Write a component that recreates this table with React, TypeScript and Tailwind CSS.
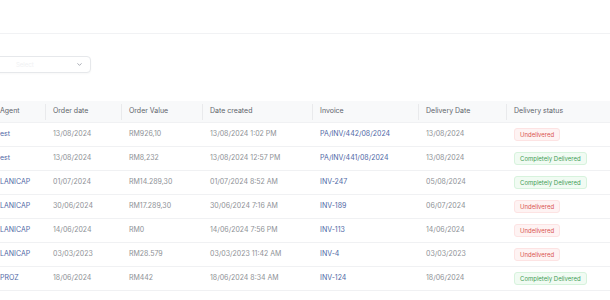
import React from 'react';
import { ChevronDown } from 'lucide-react';

type Status = 'Undelivered' | 'Completely Delivered';

interface Order {
  agent: string;
  orderDate: string;
  orderValue: string;
  created: string;
  invoice: string;
  deliveryDate: string;
  status: Status;
}

const orders: Order[] = [
  { agent: 'est', orderDate: '13/08/2024', orderValue: 'RM926,10', created: '13/08/2024 1:02 PM', invoice: 'PA/INV/442/08/2024', deliveryDate: '13/08/2024', status: 'Undelivered' },
  { agent: 'est', orderDate: '13/08/2024', orderValue: 'RM8,232', created: '13/08/2024 12:57 PM', invoice: 'PA/INV/441/08/2024', deliveryDate: '13/08/2024', status: 'Completely Delivered' },
  { agent: 'LANICAP', orderDate: '01/07/2024', orderValue: 'RM14.289,30', created: '01/07/2024 8:52 AM', invoice: 'INV-247', deliveryDate: '05/08/2024', status: 'Completely Delivered' },
  { agent: 'LANICAP', orderDate: '30/06/2024', orderValue: 'RM17.289,30', created: '30/06/2024 7:16 AM', invoice: 'INV-189', deliveryDate: '06/07/2024', status: 'Undelivered' },
  { agent: 'LANICAP', orderDate: '14/06/2024', orderValue: 'RM0', created: '14/06/2024 7:56 PM', invoice: 'INV-113', deliveryDate: '14/06/2024', status: 'Undelivered' },
  { agent: 'LANICAP', orderDate: '03/03/2023', orderValue: 'RM28.579', created: '03/03/2023 11:42 AM', invoice: 'INV-4', deliveryDate: '03/03/2023', status: 'Undelivered' },
  { agent: 'PROZ', orderDate: '18/06/2024', orderValue: 'RM442', created: '18/06/2024 8:34 AM', invoice: 'INV-124', deliveryDate: '18/06/2024', status: 'Completely Delivered' },
];

const headers = ['Agent', 'Order date', 'Order Value', 'Date created', 'Invoice', 'Delivery Date', 'Delivery status'];

const cols = 'grid grid-cols-[45px_76px_81px_110px_106px_88px_1fr]';

const StatusBadge: React.FC<{ status: Status }> = ({ status }) =>
  status === 'Undelivered' ? (
    <span className="inline-flex h-[13px] items-center rounded-[3px] border border-[#fde3e3] bg-[#fef3f3] px-[5px] text-[6px] text-[#d9534f]">
      {status}
    </span>
  ) : (
    <span className="inline-flex h-[13px] items-center rounded-[3px] border border-[#d7f3dd] bg-[#f1fbf3] px-[5px] text-[6px] text-[#3f9d55]">
      {status}
    </span>
  );

export default function App() {
  return (
    <div className="h-[300px] w-[610px] overflow-hidden bg-white font-['Inter',sans-serif]">
      {/* top bar */}
      <div className="h-[34px] border-b border-[#f1f2f4]" />

      {/* filter */}
      <div className="pt-[22px]">
        <div className="-ml-[10px] flex h-[17px] w-[101px] items-center justify-between rounded-[4px] border border-[#e6e8eb] bg-white pl-[25px] pr-[7px] shadow-[0_1px_2px_rgba(0,0,0,0.03)]">
          <span className="text-[6px] text-[#f0f1f3]">Select</span>
          <ChevronDown size={7} strokeWidth={2} className="text-[#6b7280]" />
        </div>
      </div>

      {/* table */}
      <div className="mt-[28px] text-[7px]">
        <div className={`${cols} h-[22px] items-center border-b border-[#f0f1f3] bg-[#f8f9fa] text-[#60646b]`}>
          {headers.map((h, i) => (
            <div key={h} className={`relative ${i === 0 ? '' : 'pl-2'}`}>
              {i > 0 && <span className="absolute left-0 top-1/2 h-[16px] w-px -translate-y-1/2 bg-[#e9eaec]" />}
              {h}
            </div>
          ))}
        </div>

        {orders.map((o, idx) => (
          <div key={idx} className={`${cols} h-[24px] border-b border-[#f0f1f3] text-[#8e9196]`}>
            <div className="pt-[3px] leading-[15px] text-[#5069a6]">{o.agent}</div>
            <div className="pl-2 pt-[3px] leading-[15px]">{o.orderDate}</div>
            <div className="pl-2 pt-[3px] leading-[15px]">{o.orderValue}</div>
            <div className="pl-2 pt-[3px] leading-[15px]">{o.created}</div>
            <div className="pl-2 pt-[3px] leading-[15px] text-[#5069a6]">{o.invoice}</div>
            <div className="pl-2 pt-[3px] leading-[15px]">{o.deliveryDate}</div>
            <div className="pl-2 pt-[5px]">
              <StatusBadge status={o.status} />
            </div>
          </div>
        ))}
      </div>
    </div>
  );
}
